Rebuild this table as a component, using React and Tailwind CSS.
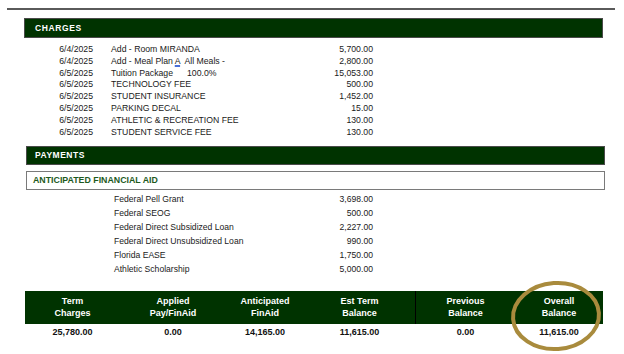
import React from 'react';

const charges = [
    { date: '6/4/2025', desc: 'Add - Room MIRANDA', amt: '5,700.00' },
    { date: '6/4/2025', desc: 'meal', amt: '2,800.00' },
    { date: '6/5/2025', desc: 'tuition', amt: '15,053.00' },
    { date: '6/5/2025', desc: 'TECHNOLOGY FEE', amt: '500.00' },
    { date: '6/5/2025', desc: 'STUDENT INSURANCE', amt: '1,452.00' },
    { date: '6/5/2025', desc: 'PARKING DECAL', amt: '15.00' },
    { date: '6/5/2025', desc: 'ATHLETIC & RECREATION FEE', amt: '130.00' },
    { date: '6/5/2025', desc: 'STUDENT SERVICE FEE', amt: '130.00' },
];

const aid = [
    { name: 'Federal Pell Grant', amt: '3,698.00' },
    { name: 'Federal SEOG', amt: '500.00' },
    { name: 'Federal Direct Subsidized Loan', amt: '2,227.00' },
    { name: 'Federal Direct Unsubsidized Loan', amt: '990.00' },
    { name: 'Florida EASE', amt: '1,750.00' },
    { name: 'Athletic Scholarship', amt: '5,000.00' },
];

const totals = [
    { w: 'w-[95px]', top: 'Term', bottom: 'Charges', value: '25,780.00' },
    { w: 'w-[106px]', top: 'Applied', bottom: 'Pay/FinAid', value: '0.00' },
    { w: 'w-[78px]', top: 'Anticipated', bottom: 'FinAid', value: '14,165.00' },
    { w: 'w-[111px]', top: 'Est Term', bottom: 'Balance', value: '11,615.00' },
    { w: 'w-[100px]', top: 'Previous', bottom: 'Balance', value: '0.00' },
    { w: 'w-[88px]', top: 'Overall', bottom: 'Balance', value: '11,615.00' },
];

const Description = ({ desc }) => {
    if (desc === 'meal') {
        return (
            <span className="whitespace-pre">
                Add - Meal Plan{' '}
                <span className="underline decoration-[#4a6fd8] decoration-[1.5px] underline-offset-[1px]">A</span>
                {'  All Meals -'}
            </span>
        );
    }
    if (desc === 'tuition') {
        return (
            <span className="whitespace-pre">
                Tuition Package<span className="ml-[14px]">100.0%</span>
            </span>
        );
    }
    return <span className="whitespace-pre">{desc}</span>;
};

export default function App() {
    return (
        <div className="relative w-[624px] h-[354px] bg-white overflow-hidden font-['Liberation_Sans',Arial,sans-serif] text-[#1a1a1a]">
            {/* top rule */}
            <div className="ml-[7px] mt-[8px] w-[608px] h-[2px] bg-[#5a5a5a]"></div>

            {/* Charges header */}
            <div className="ml-[24px] mt-[8px] w-[579px] h-[20px] bg-[#003300] border border-[#4a4a4a] flex items-center pl-[10px]">
                <span className="text-white text-[8.5px] font-bold tracking-[0.6px]">CHARGES</span>
            </div>

            <div className="mt-[6px] text-[8.7px] leading-[11.8px]">
                {charges.map((c, i) => (
                    <div key={i} className="flex h-[11.8px]">
                        <div className="w-[93px] text-right">{c.date}</div>
                        <div className="w-[218px] pl-[18px]"><Description desc={c.desc} /></div>
                        <div className="w-[62px] text-right">{c.amt}</div>
                    </div>
                ))}
            </div>

            {/* Payments header */}
            <div className="ml-[26px] mt-[7.6px] w-[579px] h-[19px] bg-[#003300] border border-[#4a4a4a] flex items-center pl-[8px]">
                <span className="text-white text-[8.5px] font-bold tracking-[0.5px]">PAYMENTS</span>
            </div>

            <div className="ml-[26px] mt-[6px] w-[579px] h-[19px] border border-[#7a7a7a] flex items-center pl-[6px]">
                <span className="text-[#1d5a1d] text-[8.8px] font-bold">ANTICIPATED FINANCIAL AID</span>
            </div>

            <div className="mt-[2px] text-[8.6px] leading-[14px]">
                {aid.map((a, i) => (
                    <div key={i} className="flex h-[14px]">
                        <div className="w-[114px]"></div>
                        <div className="w-[197px]">{a.name}</div>
                        <div className="w-[62px] text-right">{a.amt}</div>
                    </div>
                ))}
            </div>

            {/* Totals table */}
            <div className="ml-[25px] mt-[15px] w-[578px]">
                <div className="flex h-[33px] bg-[#003300] text-white text-[9px] font-bold leading-[12px]">
                    {totals.map((t, i) => (
                        <div
                            key={i}
                            className={`${t.w} flex flex-col items-center justify-center ${i === 4 ? 'border-l border-black' : ''}`}
                        >
                            <span>{t.top}</span>
                            <span>{t.bottom}</span>
                        </div>
                    ))}
                </div>
                <div className="flex h-[18px] items-center text-[9px] font-bold text-[#111]">
                    {totals.map((t, i) => (
                        <div key={i} className={`${t.w} text-center ${i === 4 ? 'border-l border-transparent' : ''}`}>
                            {t.value}
                        </div>
                    ))}
                </div>
            </div>

            {/* highlight circle */}
            <svg className="absolute left-[508px] top-[279px]" width="96" height="74" viewBox="0 0 96 74">
                <ellipse cx="48" cy="37" rx="43" ry="33" fill="none" stroke="#a98b3d" strokeWidth="4" transform="rotate(-4 48 37)" />
            </svg>
        </div>
    );
}
